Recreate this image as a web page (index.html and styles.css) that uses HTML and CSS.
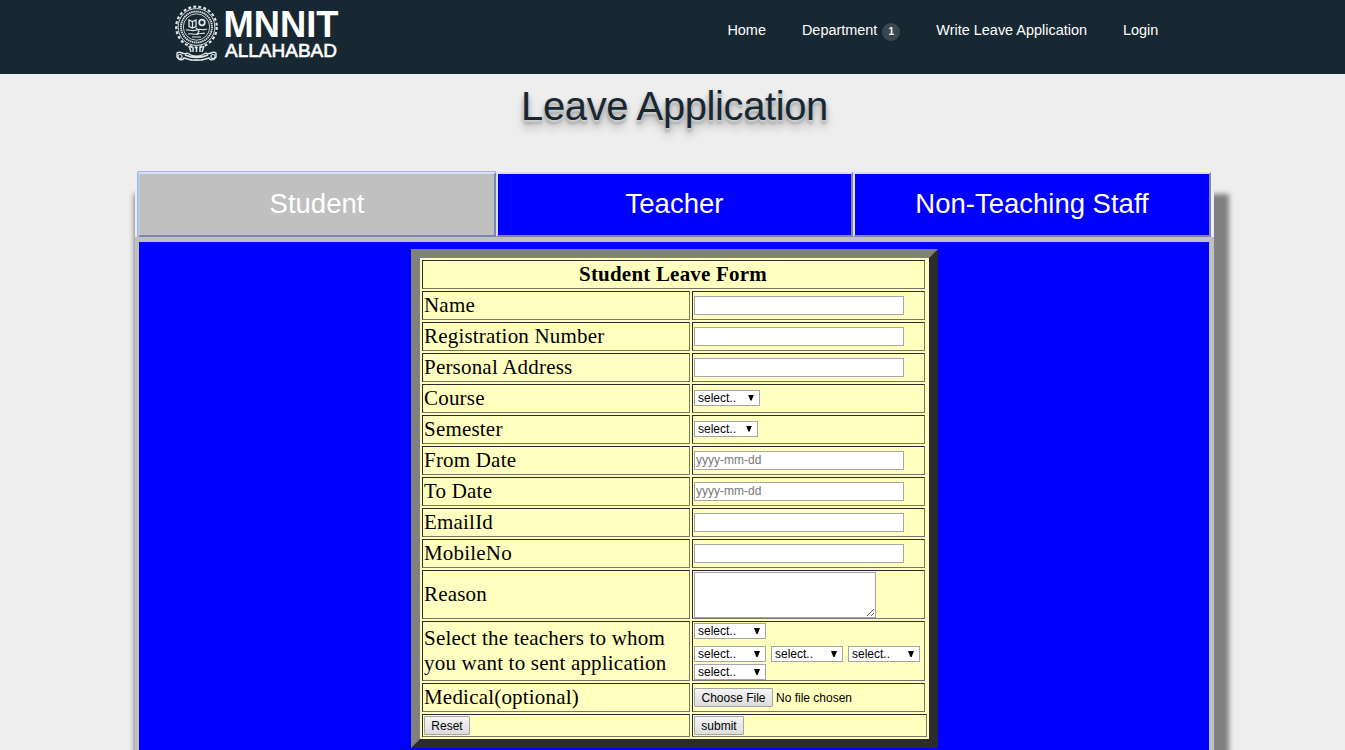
FILE: index.html
```html
<!DOCTYPE html>
<html lang="en">
<head>
<meta charset="utf-8">
<title>Leave Application</title>
<link rel="stylesheet" href="styles.css">
</head>
<body>
<header class="header">
  <svg class="logo" width="170" height="64" viewBox="0 0 170 64" role="img" aria-label="MNNIT Allahabad">
    <g fill="none" stroke="#dfe5e8">
      <circle cx="22.500" cy="27" r="20.300" stroke-width="2.200" stroke-dasharray="2.900 2.200"/>
      <circle cx="22.500" cy="27" r="18.400" stroke-width="1"/>
      <circle cx="22.500" cy="27" r="15.500" stroke-width="1.800" stroke-dasharray="1.500 .6"/>
      <circle cx="22.500" cy="27" r="13.200" stroke-width=".9"/>
      <path d="M15 20l3.500 1.500 3.500-1.500v6.500l-3.500 1.500-3.500-1.500zM18.500 21.500v6" stroke-width="1.300"/>
      <circle cx="28" cy="22.500" r="2.800" stroke-width="1.800"/>
      <path d="M12 30c3-1 6 2 10 0s7 1 11-1M14 34c4-1 5 1 9 0s5 0 8-1M18 37h9M22 28l3 3-2 4" stroke-width="1.200"/>
      <path d="M15 46l2 6M30 46l-2 6M19 47v5M26 47v5M22.500 47v5" stroke-width="1.500"/>
      <path d="M3 53c4-3 6 3 10 0 6 4 13 4 19 0 4 3 6-3 10 0v4c-2 3-6 4-7 1-8 3-17 3-25 0-1 3-5 2-7-1zM11 55c7 3 16 3 23 0M16 60h13" stroke-width="1.400"/>
      <circle cx="6" cy="56.500" r="2" stroke-width="1.200"/>
      <circle cx="39" cy="56.500" r="2" stroke-width="1.200"/>
    </g>
    <text class="logo-top" x="49.500" y="37" textLength="115" lengthAdjust="spacingAndGlyphs">MNNIT</text>
    <text class="logo-bottom" x="51" y="57" textLength="112" lengthAdjust="spacingAndGlyphs">ALLAHABAD</text>
  </svg>
  <nav class="nav">
    <a>Home</a>
    <a class="dept">Department<span class="badge">1</span></a>
    <a>Write Leave Application</a>
    <a>Login</a>
  </nav>
</header>
<h1 class="title">Leave Application</h1>
<main class="panel">
  <div class="tabs">
    <div class="tab active">Student</div>
    <div class="tab">Teacher</div>
    <div class="tab">Non-Teaching Staff</div>
  </div>
  <section class="body">
    <form class="form">
      <div class="cell head">Student Leave Form</div>
      <div class="cell">Name</div><div class="cell"><input class="field"></div>
      <div class="cell">Registration Number</div><div class="cell"><input class="field"></div>
      <div class="cell">Personal Address</div><div class="cell"><input class="field"></div>
      <div class="cell">Course</div><div class="cell"><div class="select course">select..<i class="arrow"></i></div></div>
      <div class="cell">Semester</div><div class="cell"><div class="select semester">select..<i class="arrow"></i></div></div>
      <div class="cell">From Date</div><div class="cell"><input class="field" placeholder="yyyy-mm-dd"></div>
      <div class="cell">To Date</div><div class="cell"><input class="field" placeholder="yyyy-mm-dd"></div>
      <div class="cell">EmailId</div><div class="cell"><input class="field"></div>
      <div class="cell">MobileNo</div><div class="cell"><input class="field"></div>
      <div class="cell">Reason</div><div class="cell"><textarea class="reason"></textarea></div>
      <div class="cell">Select the teachers to whom<br>you want to sent application</div>
      <div class="cell teachers">
        <div class="select">select..<i class="arrow"></i></div>
        <div class="line">
          <div class="select">select..<i class="arrow"></i></div>
          <div class="select">select..<i class="arrow"></i></div>
          <div class="select">select..<i class="arrow"></i></div>
        </div>
        <div class="select">select..<i class="arrow"></i></div>
      </div>
      <div class="cell">Medical(optional)</div>
      <div class="cell"><button type="button" class="btn choose">Choose File</button><span class="nofile">No file chosen</span></div>
      <div class="cell"><button type="reset" class="btn reset">Reset</button></div>
      <div class="cell last"><button type="button" class="btn submit">submit</button></div>
    </form>
  </section>
</main>
</body>
</html>
```
FILE: styles.css
```css
* { box-sizing: border-box; }
html { overflow: hidden; }
body {
  margin: 0;
  height: 750px;
  overflow: hidden;
  background: #eee;
  font-family: "Liberation Sans", Arial, sans-serif;
}
.header {
  display: flex;
  justify-content: space-between;
  height: 74px;
  padding: 0 186.700px 0 174px;
  background: #172832;
}
.logo { display: block; }
.logo text { fill: #fff; font-family: "Liberation Sans", Arial, sans-serif; }
.logo-top { font-size: 36px; font-weight: bold; }
.logo-bottom { font-size: 18.500px; stroke: #fff; stroke-width: .6px; }
.nav {
  display: flex;
  gap: 36px;
  padding-top: 21px;
  color: #fff;
  font-size: 14.450px;
  line-height: 18px;
}
.dept { display: flex; gap: 5px; }
.badge {
  width: 18px;
  height: 18px;
  margin-top: 2px;
  border-radius: 50%;
  background: #3a4750;
  font-size: 10px;
  font-weight: bold;
  text-align: center;
}
.title {
  height: 98px;
  margin: 0;
  padding: 9px 0 0 4px;
  color: #172832;
  font-size: 40px;
  font-weight: normal;
  letter-spacing: -.4px;
  line-height: 46px;
  text-align: center;
  text-shadow: 0 1px 0 #ccc, 0 2px 0 #c9c9c9, 0 3px 0 #bbb, 0 4px 2px rgba(0,0,0,.1), 0 3px 5px rgba(0,0,0,.25), 0 8px 8px rgba(0,0,0,.25);
}
.panel {
  width: 1079px;
  height: 578px;
  margin-left: 135px;
  background: #eee;
  box-shadow: 7px 30px 5px 8px #808080;
}
.tabs {
  display: grid;
  grid-template-columns: 358px 357px 358px;
  height: 65px;
  padding-left: 3px;
}
.tab {
  border: 2px solid;
  border-color: #dbdff0 #8585a0 #8585a0 #dbdff0;
  background: #00f;
  color: #fff;
  font-size: 27.500px;
  line-height: 60px;
  text-align: center;
}
.tab.active {
  border-color: #d8e2f2 #778aab #778aab #b7c9e8;
  background: silver;
  box-shadow: 0 -1px 0 #9fb8e8, -1px 0 0 #9fb8e8;
}
.body {
  height: 513px;
  padding: 7px 0 0 272px;
  border: solid silver;
  border-width: 5px 5px 0 4px;
  background: #00f;
}
.form {
  display: grid;
  grid-template-columns: 268px 233px;
  grid-template-rows: repeat(10, 29px) 49px 60px 29px 23px;
  gap: 2px;
  width: 527px;
  height: 499px;
  padding: 2px;
  border: 9px solid;
  border-color: #808080 #2c2c2c #2c2c2c #808080;
  background: #ffffc0;
  color: #000;
  font: 21px/25px "Liberation Serif", "Times New Roman", serif;
  letter-spacing: .2px;
}
.cell {
  display: flex;
  align-items: center;
  min-width: 0;
  padding: 0 1px;
  border: 1px solid;
  border-color: #2c2c2c #77775c #77775c #2c2c2c;
}
.head { grid-column: 1 / 3; justify-content: center; padding-right: 2px; font-weight: bold; }
.last { width: 235px; }
.field, .reason {
  margin: 0;
  padding: 1px;
  border: 1px solid #a5a5a5;
  border-radius: 0;
  outline: 0;
  background: #fff;
  font: 12px "Liberation Sans", Arial, sans-serif;
}
.field { width: 210px; height: 19px; padding-bottom: 2px; }
.field::placeholder { color: #777; }
.reason { width: 182px; height: 46px; resize: both; }
.select {
  display: flex;
  align-items: center;
  justify-content: space-between;
  width: 72px;
  height: 16px;
  padding: 0 5px 0 3px;
  border: 1px solid #a5a5a5;
  background: #fff;
  font: 12px/14px "Liberation Sans", Arial, sans-serif;
  letter-spacing: 0;
}
.course { width: 66px; margin-bottom: 2px; }
.semester { width: 64px; margin-bottom: 2px; }
.arrow {
  width: 6px;
  height: 6px;
  background: #000;
  clip-path: polygon(0 0, 100% 0, 60% 100%, 40% 100%);
}
.teachers { flex-direction: column; align-items: flex-start; justify-content: flex-start; padding-top: 1px; }
.line { display: flex; gap: 5px; margin: 7px 0 2px; }
.btn {
  height: 19px;
  margin: 0;
  padding: 1px 0 0;
  border: 1px solid #a5a5a5;
  border-radius: 1px;
  background: linear-gradient(#f5f5f5, #dcdcdc);
  color: #000;
  font: 12px/16px "Liberation Sans", Arial, sans-serif;
}
.choose { width: 79px; }
.reset { width: 46px; }
.submit { width: 50px; }
.nofile { margin-left: 3px; font: 12px "Liberation Sans", Arial, sans-serif; letter-spacing: 0; }
```
